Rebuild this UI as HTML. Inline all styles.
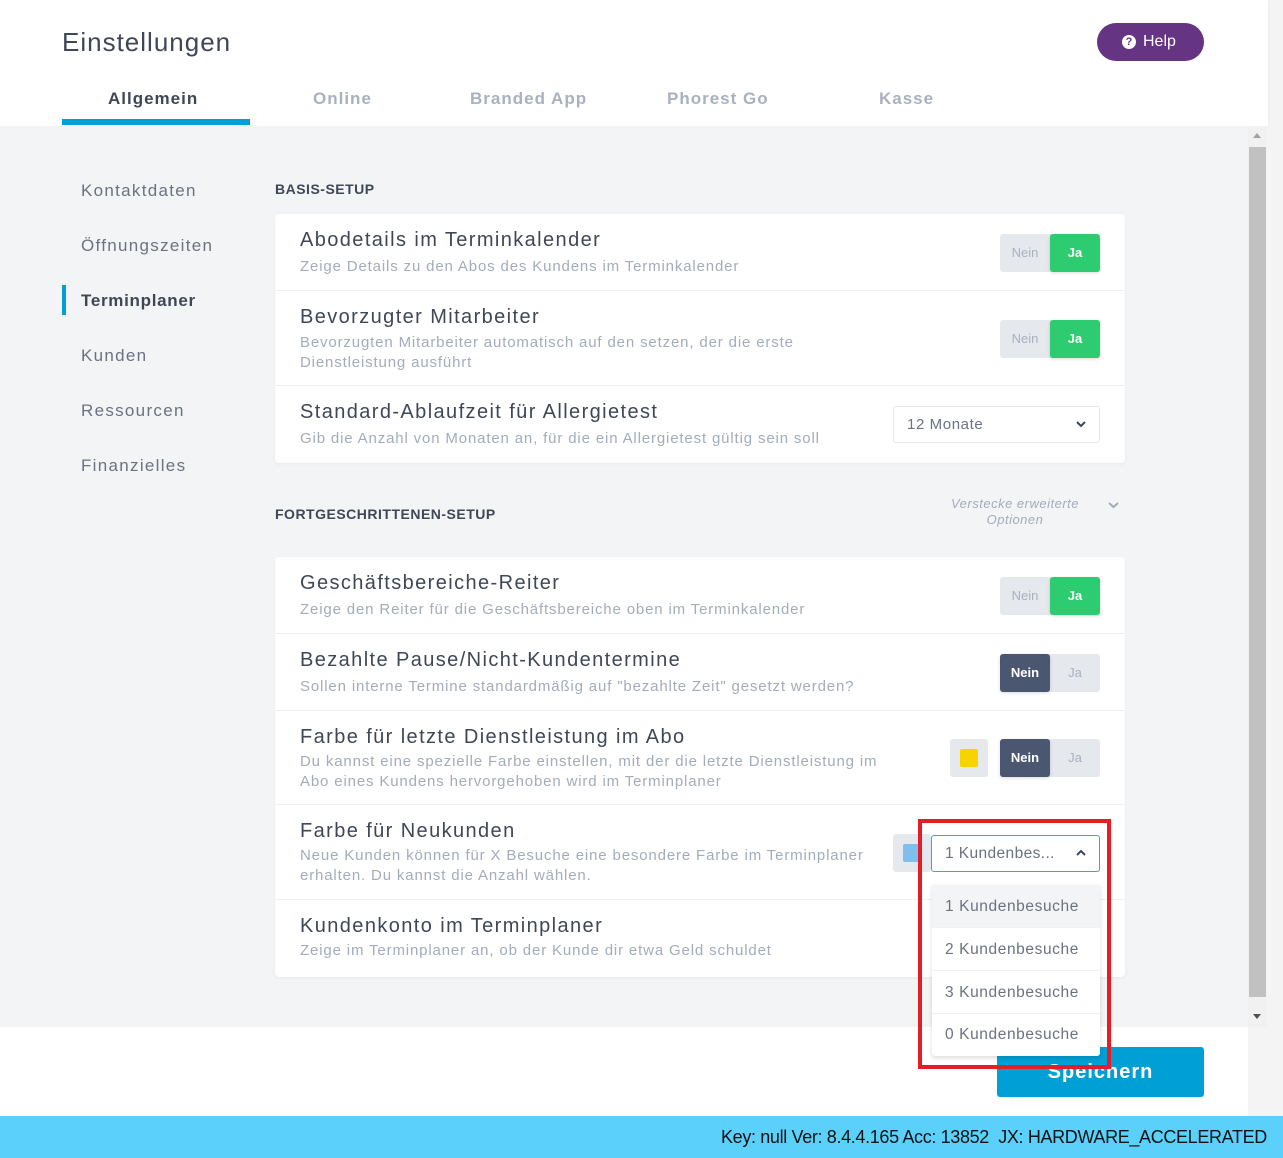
<!DOCTYPE html>
<html><head><meta charset="utf-8"><style>
*{box-sizing:border-box;margin:0;padding:0}
body{width:1283px;height:1158px;position:relative;overflow:hidden;font-family:"Liberation Sans",sans-serif;background:#f4f4f5}
.a{position:absolute}
.hdr{left:0;top:0;width:1268px;height:126px;background:#fff;box-shadow:0 1px 3px rgba(0,0,0,.06)}
.main{left:0;top:126px;width:1248px;height:901px;background:#f3f4f6}
.tab{top:89px;font-size:17px;font-weight:bold;color:#a9b1bf;letter-spacing:1px}
.side{left:81px;font-size:17px;color:#6b7280;letter-spacing:1.3px}
.sec{left:275px;font-size:14px;font-weight:bold;color:#3f4757;letter-spacing:.5px}
.card{left:275px;width:850px;background:#fff;border-radius:4px;box-shadow:0 1px 3px rgba(0,0,0,.05)}
.row{position:absolute;left:0;width:850px;border-bottom:1px solid #eef0f3}
.t{position:absolute;left:25px;font-size:20px;color:#3f4757;letter-spacing:1.4px;white-space:nowrap}
.d{position:absolute;left:25px;font-size:15px;color:#a3acbb;line-height:20px;letter-spacing:.85px;white-space:nowrap}
.tg{position:absolute;left:725px;width:100px;height:38px;background:#e5e8ed;border-radius:3px;font-size:13px;color:#a9b1bf}
.tg span{position:absolute;top:0;width:50px;height:38px;line-height:38px;text-align:center;border-radius:3px}
.tg .n{left:0}.tg .j{left:50px}
.on{background:#2ecc71;color:#fff;font-weight:bold;box-shadow:0 1px 3px rgba(0,0,0,.15)}
.off{background:#4b5670;color:#fff;font-weight:bold;box-shadow:0 1px 3px rgba(0,0,0,.15)}
.sw{position:absolute;width:38px;height:38px;background:#e5e8ed;border-radius:3px}
.sw i{position:absolute;left:10px;top:10px;width:18px;height:18px;border-radius:2px}
.dd{position:absolute;background:#fff;box-shadow:0 2px 5px rgba(0,0,0,.15);border-radius:3px}
.opt{position:absolute;left:0;width:168px;height:43px;line-height:43px;padding-left:13px;font-size:15.5px;color:#6b7280;border-bottom:1px solid #eef0f3;letter-spacing:.6px;white-space:nowrap}
</style></head><body>
<div class="a hdr"></div>
<div class="a" style="left:62px;top:27px;font-size:26px;color:#3f4757;letter-spacing:1px">Einstellungen</div>
<div class="a" style="left:1097px;top:23px;width:107px;height:38px;border-radius:19px;background:#653483;color:#fff;font-size:16px;line-height:38px;padding-left:26px">
<span style="position:absolute;left:25px;top:12px;width:14px;height:14px;border-radius:7px;background:#fff;color:#653483;font-size:11px;font-weight:bold;line-height:14px;text-align:center">?</span><span style="margin-left:20px">Help</span></div>
<div class="a tab" style="left:108px;color:#3f4757">Allgemein</div>
<div class="a tab" style="left:313px">Online</div>
<div class="a tab" style="left:470px">Branded App</div>
<div class="a tab" style="left:667px">Phorest Go</div>
<div class="a tab" style="left:879px">Kasse</div>
<div class="a" style="left:62px;top:119px;width:188px;height:6px;background:#00a0d6"></div>

<div class="a main"></div>
<div class="a" style="left:1248px;top:126px;width:19px;height:901px;background:#f1f1f1"></div>
<div class="a" style="left:1249px;top:147px;width:17px;height:850px;background:#c1c1c1"></div>
<div class="a" style="left:1253px;top:133px;border:4px solid transparent;border-bottom:5px solid #a3a3a3;border-top:0"></div>
<div class="a" style="left:1253px;top:1014px;border:4px solid transparent;border-top:5px solid #505050;border-bottom:0"></div>

<div class="a side" style="top:181px">Kontaktdaten</div>
<div class="a side" style="top:236px">Öffnungszeiten</div>
<div class="a" style="left:62px;top:285px;width:4px;height:30px;background:#00a0d6"></div>
<div class="a side" style="top:291px;font-weight:bold;color:#3f4757;letter-spacing:.7px">Terminplaner</div>
<div class="a side" style="top:346px">Kunden</div>
<div class="a side" style="top:401px">Ressourcen</div>
<div class="a side" style="top:456px">Finanzielles</div>

<div class="a sec" style="top:181px">BASIS-SETUP</div>
<div class="a card" style="top:214px;height:249px">
 <div class="row" style="top:0;height:77px"><div class="t" style="top:15px">Abodetails im Terminkalender</div><div class="d" style="top:43px">Zeige Details zu den Abos des Kundens im Terminkalender</div><div class="tg" style="top:20px"><span class="n">Nein</span><span class="j on">Ja</span></div></div>
 <div class="row" style="top:77px;height:95px"><div class="t" style="top:15px">Bevorzugter Mitarbeiter</div><div class="d" style="top:42px">Bevorzugten Mitarbeiter automatisch auf den setzen, der die erste<br>Dienstleistung ausführt</div><div class="tg" style="top:29px"><span class="n">Nein</span><span class="j on">Ja</span></div></div>
 <div class="row" style="top:172px;height:77px;border:0"><div class="t" style="top:15px">Standard-Ablaufzeit für Allergietest</div><div class="d" style="top:43px">Gib die Anzahl von Monaten an, für die ein Allergietest gültig sein soll</div>
 <div style="position:absolute;left:618px;top:20px;width:207px;height:37px;border:1px solid #e3e6eb;border-radius:3px;font-size:15px;color:#6b7280;line-height:35px;padding-left:13px;letter-spacing:.6px">12 Monate<svg style="position:absolute;right:13px;top:14px" width="10" height="7"><path d="M1 1l4 4 4-4" stroke="#3f4757" stroke-width="2" fill="none"/></svg></div></div>
</div>

<div class="a sec" style="top:506px">FORTGESCHRITTENEN-SETUP</div>
<div class="a" style="left:940px;top:496px;width:150px;text-align:center;font-size:13px;font-style:italic;color:#a3acbb;line-height:16px;letter-spacing:.5px">Verstecke erweiterte Optionen</div>
<svg class="a" style="left:1108px;top:502px" width="11" height="7"><path d="M1 1l4.5 4 4.5-4" stroke="#a3acbb" stroke-width="2" fill="none"/></svg>

<div class="a card" style="top:557px;height:420px">
 <div class="row" style="top:0;height:77px"><div class="t" style="top:15px">Geschäftsbereiche-Reiter</div><div class="d" style="top:43px">Zeige den Reiter für die Geschäftsbereiche oben im Terminkalender</div><div class="tg" style="top:20px"><span class="n">Nein</span><span class="j on">Ja</span></div></div>
 <div class="row" style="top:77px;height:77px"><div class="t" style="top:15px">Bezahlte Pause/Nicht-Kundentermine</div><div class="d" style="top:43px">Sollen interne Termine standardmäßig auf "bezahlte Zeit" gesetzt werden?</div><div class="tg" style="top:20px"><span class="n off">Nein</span><span class="j">Ja</span></div></div>
 <div class="row" style="top:154px;height:94px"><div class="t" style="top:15px">Farbe für letzte Dienstleistung im Abo</div><div class="d" style="top:41px">Du kannst eine spezielle Farbe einstellen, mit der die letzte Dienstleistung im<br>Abo eines Kundens hervorgehoben wird im Terminplaner</div><div class="sw" style="left:675px;top:28px"><i style="background:#f7d400"></i></div><div class="tg" style="top:28px"><span class="n off">Nein</span><span class="j">Ja</span></div></div>
 <div class="row" style="top:248px;height:95px"><div class="t" style="top:15px">Farbe für Neukunden</div><div class="d" style="top:41px">Neue Kunden können für X Besuche eine besondere Farbe im Terminplaner<br>erhalten. Du kannst die Anzahl wählen.</div><div class="sw" style="left:618px;top:29px"><i style="background:#7fbfee"></i></div></div>
 <div class="row" style="top:343px;height:77px;border:0"><div class="t" style="top:15px">Kundenkonto im Terminplaner</div><div class="d" style="top:41px">Zeige im Terminplaner an, ob der Kunde dir etwa Geld schuldet</div></div>
</div>

<div class="a" style="left:0;top:1027px;width:1248px;height:89px;background:#fff"></div>
<div class="a" style="left:997px;top:1047px;width:207px;height:50px;background:#00a0d6;border-radius:3px;color:#fff;font-size:20px;font-weight:bold;text-align:center;line-height:50px;letter-spacing:1px">Speichern</div>

<div class="a" style="left:931px;top:835px;width:169px;height:37px;background:#fff;border:1px solid #36a7dd;border-radius:3px;font-size:15.5px;color:#6b7280;line-height:35px;padding-left:13px;letter-spacing:.4px">1 Kundenbes...<svg style="position:absolute;right:13px;top:13px" width="10" height="7"><path d="M1 6l4-4 4 4" stroke="#3f4757" stroke-width="2" fill="none"/></svg></div>
<div class="a dd" style="left:932px;top:885px;width:168px;height:171px">
 <div class="opt" style="top:0;background:#f3f4f6">1 Kundenbesuche</div>
 <div class="opt" style="top:43px">2 Kundenbesuche</div>
 <div class="opt" style="top:86px">3 Kundenbesuche</div>
 <div class="opt" style="top:128px;border:0">0 Kundenbesuche</div>
</div>
<div class="a" style="left:918px;top:819px;width:193px;height:250px;border:4px solid #e41e26"></div>

<div class="a" style="left:0;top:1116px;width:1283px;height:42px;background:#5bd0fb"></div>
<div class="a" style="left:721px;top:1127px;font-size:18px;color:#111;white-space:nowrap;letter-spacing:-.35px">Key: null Ver: 8.4.4.165 Acc: 13852&nbsp; JX: HARDWARE_ACCELERATED</div>
</body></html>
